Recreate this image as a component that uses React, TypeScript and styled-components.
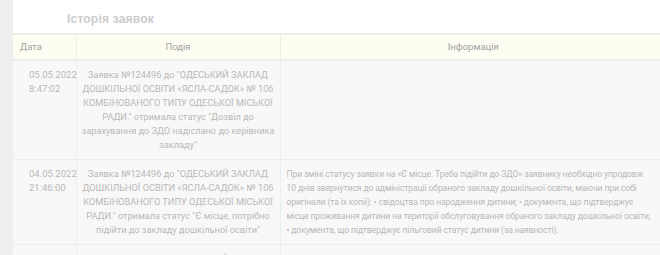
import React from 'react'
import styled, { createGlobalStyle } from 'styled-components'

const GlobalStyle = createGlobalStyle`
  html, body {
    margin: 0;
    padding: 0;
    background: #ffffff;
    font-family: Roboto, 'Liberation Sans', Arial, sans-serif;
    overflow: hidden;
  }
`

const Page = styled.div`
  display: flex;
  width: 680px;
  height: 255px;
  overflow: hidden;
`

const SideStrip = styled.div`
  width: 13px;
  flex: none;
  background: #eeeeee;
`

const Card = styled.div`
  flex: 1;
  background: #ffffff;
  display: flex;
  flex-direction: column;
  min-height: 0;
`

const Title = styled.h2`
  flex: none;
  margin: 0;
  height: 35px;
  padding: 4px 0 0 54px;
  box-sizing: border-box;
  display: flex;
  align-items: center;
  font-family: 'Liberation Sans', Arial, sans-serif;
  font-size: 12px;
  letter-spacing: 0.2px;
  font-weight: 700;
  color: #cbcbcb;
  border-bottom: 2px solid #eeeeea;
`

const Table = styled.table`
  flex: none;
  width: 654px;
  border-collapse: collapse;
  table-layout: fixed;
  font-family: Roboto, 'Liberation Sans', Arial, sans-serif;
  font-size: 9.5px;
  line-height: 14px;
`

const HeadCell = styled.th<{ $align?: string }>`
  height: 24px;
  padding: 0 7px;
  background: #fdfdf1;
  color: #a3a3a3;
  font-weight: 400;
  font-size: 9.5px;
  text-align: ${({ $align }) => $align || 'center'};
  border-right: 1px solid #eef1ea;
  border-bottom: 2px solid #ececea;
`

const Row = styled.tr`
  background: #f8f8f8;
  border-bottom: 1px solid #e8eff1;
`

const Cell = styled.td`
  vertical-align: top;
  padding: 7px 6px 7px;
  font-size: 9.5px;
  line-height: 14px;
  color: #b9b9b9;
  text-align: left;
  border-right: 1px solid #e8eff1;
`

const DateCell = styled(Cell)`
  padding-left: 16px;
  padding-right: 2px;
`

const EventCell = styled(Cell)`
  padding-left: 3px;
  padding-right: 3px;
  text-align: center;
  font-size: 9.2px;
`

const InfoCell = styled(Cell)`
  padding-left: 6px;
  padding-right: 6px;
  font-size: 8.6px;
  letter-spacing: -0.12px;
`

const Line = styled.div`
  white-space: nowrap;
`

type Entry = {
  date: string
  time: string
  event: string[]
  info: string[]
}

const entries: Entry[] = [
  {
    date: '05.05.2022',
    time: '8:47:02',
    event: [
      'Заявка №124496 до "ОДЕСЬКИЙ ЗАКЛАД',
      'ДОШКІЛЬНОЇ ОСВІТИ «ЯСЛА-САДОК» № 106',
      'КОМБІНОВАНОГО ТИПУ ОДЕСЬКОЇ МІСЬКОЇ',
      'РАДИ." отримала статус "Дозвіл до',
      'зарахування до ЗДО надіслано до керівника',
      'закладу"',
    ],
    info: [],
  },
  {
    date: '04.05.2022',
    time: '21:46:00',
    event: [
      'Заявка №124496 до "ОДЕСЬКИЙ ЗАКЛАД',
      'ДОШКІЛЬНОЇ ОСВІТИ «ЯСЛА-САДОК» № 106',
      'КОМБІНОВАНОГО ТИПУ ОДЕСЬКОЇ МІСЬКОЇ',
      'РАДИ." отримала статус "Є місце, потрібно',
      'підійти до закладу дошкільної освіти"',
    ],
    info: [
      'При зміні статусу заявки на «Є місце. Треба підійти до ЗДО» заявнику необхідно упродовж',
      '10 днів звернутися до адміністрації обраного закладу дошкільної освіти, маючи при собі',
      'оригінали (та їх копії): • свідоцтва про народження дитини; • документа, що підтверджує',
      'місце проживання дитини на території обслуговування обраного закладу дошкільної освіти;',
      '• документа, що підтверджує пільговий статус дитини (за наявності).',
    ],
  },
  {
    date: '11.03.2022',
    time: '10:12:45',
    event: [
      'Заявка №124496 до "ОДЕСЬКИЙ ЗАКЛАД',
      'ДОШКІЛЬНОЇ ОСВІТИ «ЯСЛА-САДОК» № 106',
      'КОМБІНОВАНОГО ТИПУ ОДЕСЬКОЇ МІСЬКОЇ',
      'РАДИ." отримала статус "Зареєстровано"',
    ],
    info: [],
  },
]

const App: React.FC = () => {
  return (
    <>
      <GlobalStyle />
      <Page>
        <SideStrip />
        <Card>
          <Title>Історія заявок</Title>
          <Table>
            <colgroup>
              <col style={{ width: 63 }} />
              <col style={{ width: 204 }} />
              <col />
            </colgroup>
            <thead>
              <tr>
                <HeadCell $align="left">Дата</HeadCell>
                <HeadCell>Подія</HeadCell>
                <HeadCell>Інформація</HeadCell>
              </tr>
            </thead>
            <tbody>
              {entries.map((entry, index) => (
                // eslint-disable-next-line react/no-array-index-key
                <Row key={index}>
                  <DateCell>
                    {entry.date}
                    <br />
                    {entry.time}
                  </DateCell>
                  <EventCell>
                    {entry.event.map((line) => (
                      <Line key={line}>{line}</Line>
                    ))}
                  </EventCell>
                  <InfoCell>
                    {entry.info.map((line) => (
                      <Line key={line}>{line}</Line>
                    ))}
                  </InfoCell>
                </Row>
              ))}
            </tbody>
          </Table>
        </Card>
      </Page>
    </>
  )
}

export default App
